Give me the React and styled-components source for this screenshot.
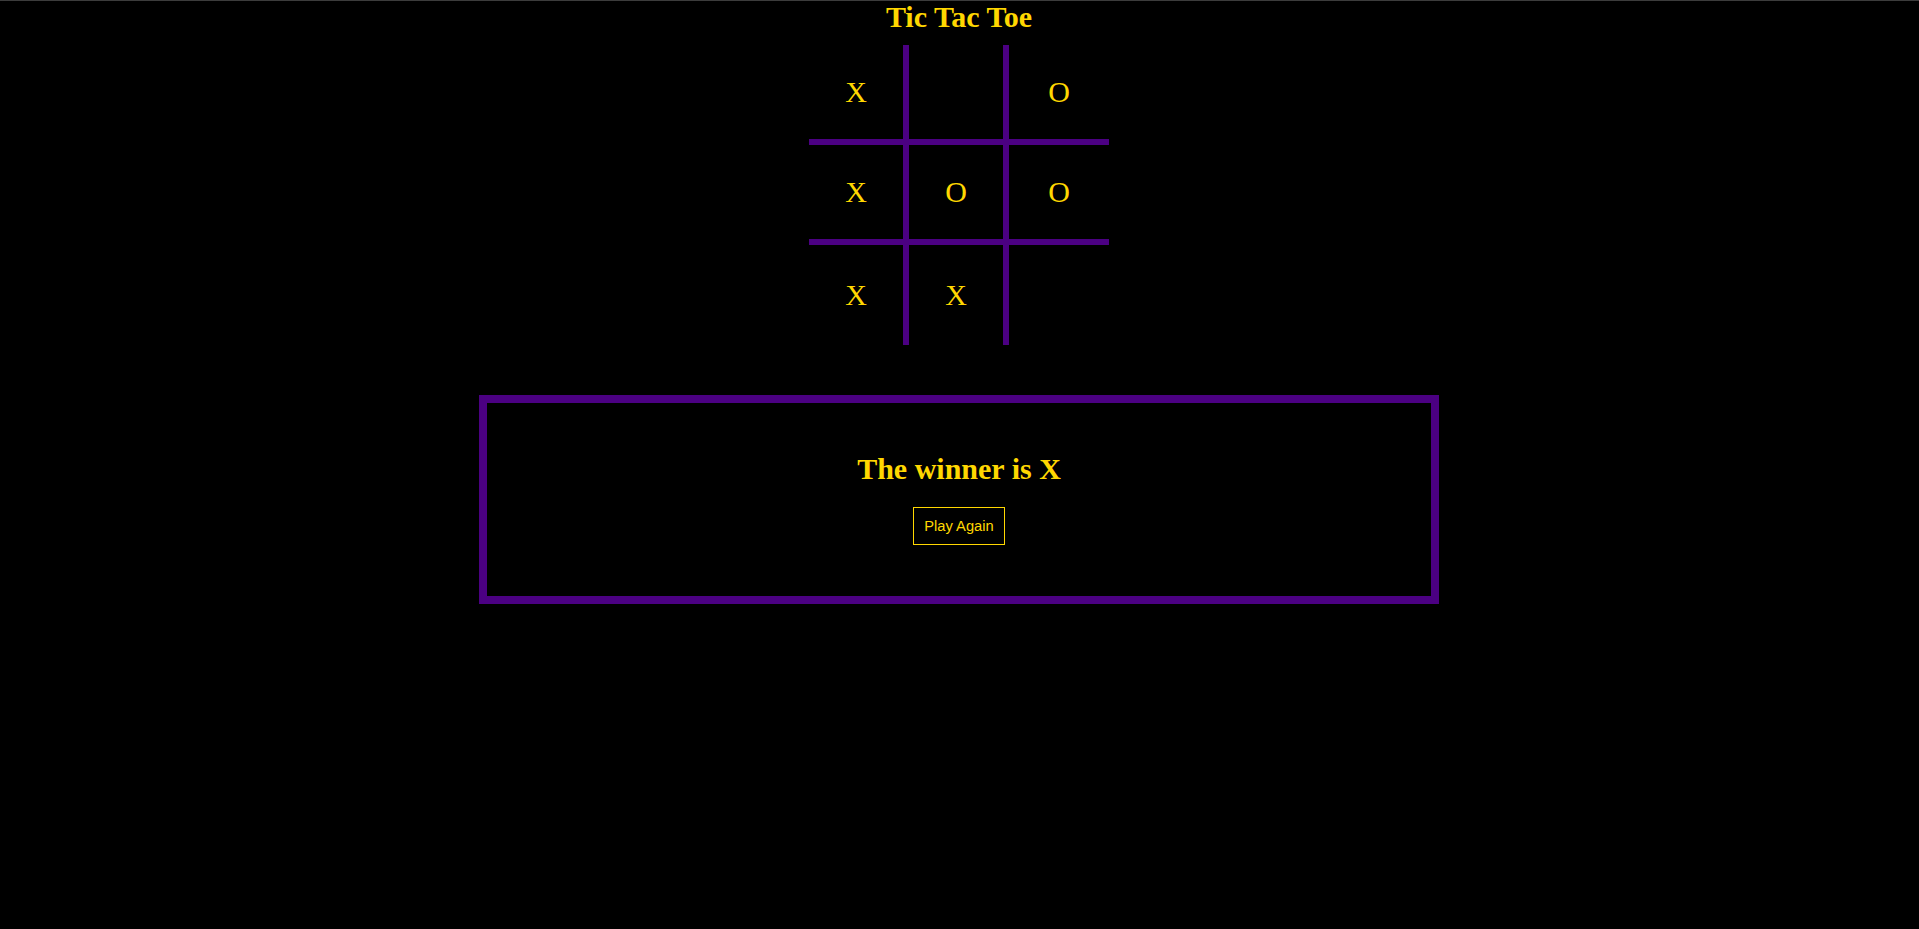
import React, { useState } from "react";
import styled, { createGlobalStyle } from "styled-components";

const GOLD = "#ffd700";
const INDIGO = "#4b0082";

const GlobalStyle = createGlobalStyle`
  html, body {
    margin: 0;
    padding: 0;
    background: #000;
  }
  body {
    min-height: 100vh;
    box-shadow: inset 0 1px 0 #3c3c3c;
    font-family: "Liberation Serif", "Times New Roman", serif;
  }
`;

const Page = styled.div`
  display: flex;
  flex-direction: column;
  align-items: center;
  padding-right: 1px;
`;

const Title = styled.h1`
  margin: 0 0 11px;
  font-size: 30px;
  line-height: 34px;
  font-weight: bold;
  color: ${GOLD};
`;

const Board = styled.div`
  display: grid;
  grid-template-columns: repeat(3, 100px);
  grid-template-rows: repeat(3, 100px);
`;

const Cell = styled.div`
  box-sizing: border-box;
  display: flex;
  align-items: center;
  justify-content: center;
  font-size: 30px;
  line-height: 34px;
  color: ${GOLD};
  cursor: pointer;
  border-right: ${(props) => (props.$right ? `6px solid ${INDIGO}` : "none")};
  border-bottom: ${(props) => (props.$bottom ? `6px solid ${INDIGO}` : "none")};
`;

const ResultBox = styled.div`
  box-sizing: border-box;
  width: 960px;
  margin-top: 50px;
  padding: 49px 0 51px;
  border: 8px solid ${INDIGO};
  display: flex;
  flex-direction: column;
  align-items: center;
`;

const Winner = styled.h2`
  margin: 0 0 21px;
  font-size: 30px;
  line-height: 34px;
  font-weight: bold;
  color: ${GOLD};
`;

const Button = styled.button`
  padding: 9px 10px;
  background: transparent;
  border: 1px solid ${GOLD};
  border-radius: 0;
  color: ${GOLD};
  font-family: "Liberation Sans", Arial, sans-serif;
  font-size: 14.7px;
  line-height: 18px;
  cursor: pointer;
`;

const LINES = [
  [0, 1, 2],
  [3, 4, 5],
  [6, 7, 8],
  [0, 3, 6],
  [1, 4, 7],
  [2, 5, 8],
  [0, 4, 8],
  [2, 4, 6],
];

function getWinner(squares) {
  for (const [a, b, c] of LINES) {
    if (squares[a] && squares[a] === squares[b] && squares[a] === squares[c]) {
      return squares[a];
    }
  }
  return null;
}

const START = ["X", "", "O", "X", "O", "O", "X", "X", ""];

export default function App() {
  const [squares, setSquares] = useState(START);
  const winner = getWinner(squares);

  const handleClick = (i) => {
    if (winner || squares[i]) return;
    const count = squares.filter(Boolean).length;
    const next = squares.slice();
    next[i] = count % 2 === 0 ? "X" : "O";
    setSquares(next);
  };

  return (
    <Page>
      <GlobalStyle />
      <Title>Tic Tac Toe</Title>
      <Board>
        {squares.map((value, i) => (
          <Cell
            key={i}
            $right={i % 3 < 2}
            $bottom={i < 6}
            onClick={() => handleClick(i)}
          >
            {value}
          </Cell>
        ))}
      </Board>
      {winner && (
        <ResultBox>
          <Winner>The winner is {winner}</Winner>
          <Button onClick={() => setSquares(Array(9).fill(""))}>
            Play Again
          </Button>
        </ResultBox>
      )}
    </Page>
  );
}
